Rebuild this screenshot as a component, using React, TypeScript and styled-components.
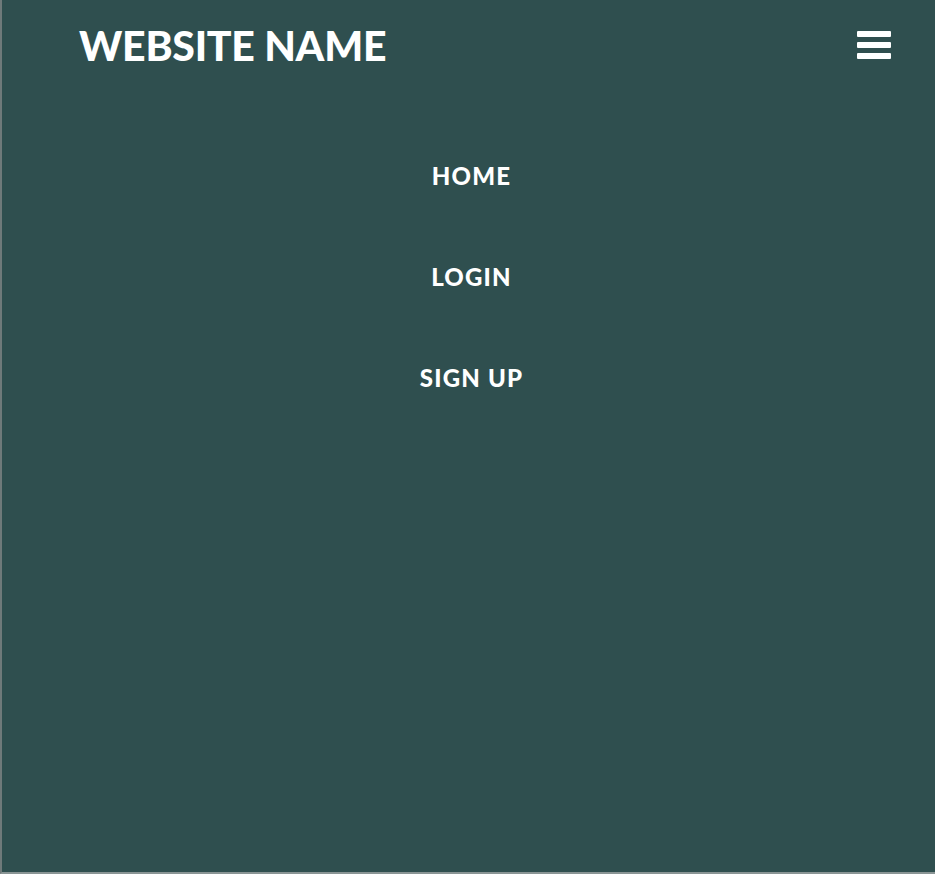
import React from 'react'
import styled, { createGlobalStyle } from 'styled-components'

const Global = createGlobalStyle`
  html, body {
    margin: 0;
    padding: 0;
    background: #2f4f4f;
  }
  body {
    font-family: Lato, "Noto Sans", sans-serif;
  }
`

const Page = styled.div`
  min-height: 874px;
  background: #2f4f4f;
  color: #fff;
  box-sizing: border-box;
  border-left: 2px solid #6f7a7a;
  border-bottom: 2px solid #8a9595;
`

const Header = styled.header`
  display: flex;
  justify-content: space-between;
  align-items: center;
  height: 90px;
  padding: 0 44px 0 77px;
`

const Brand = styled.h1`
  margin: 0;
  font-size: 41px;
  font-weight: 900;
  letter-spacing: -0.25px;
  text-transform: uppercase;
`

const Burger = styled.button`
  display: flex;
  flex-direction: column;
  gap: 5px;
  padding: 0;
  border: 0;
  background: transparent;
  cursor: pointer;
`

const Bar = styled.span`
  display: block;
  width: 34px;
  height: 6px;
  border-radius: 1px;
  background: #fff;
`

const Nav = styled.nav`
  display: flex;
  flex-direction: column;
  align-items: center;
  gap: 72px;
  padding: 71px 0 0 6px;
`

const NavLink = styled.a`
  color: #fff;
  text-decoration: none;
  font-size: 24px;
  font-weight: 900;
  line-height: 29px;
  letter-spacing: 1.2px;
  text-transform: uppercase;
`

export default function App() {
  const links = ['Home', 'Login', 'Sign up']
  return (
    <Page>
      <Global />
      <Header>
        <Brand>Website Name</Brand>
        <Burger aria-label="menu">
          <Bar />
          <Bar />
          <Bar />
        </Burger>
      </Header>
      <Nav>
        {links.map((l) => (
          <NavLink key={l} href="#">
            {l}
          </NavLink>
        ))}
      </Nav>
    </Page>
  )
}
